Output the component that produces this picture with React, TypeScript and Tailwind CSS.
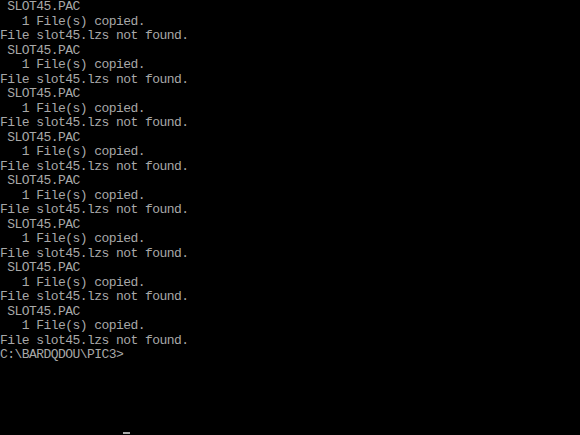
const group = [' SLOT45.PAC', '   1 File(s) copied.', 'File slot45.lzs not found.'];

const lines: string[] = [
  ...Array.from({ length: 8 }).flatMap(() => group),
  'C:\\BARDQDOU\\PIC3>',
];

export default function App() {
  return (
    <div
      className="h-[435px] w-[580px] overflow-hidden bg-black text-[13px] tracking-[-0.55px] text-[#a8a8a8]"
      style={{ fontFamily: '"Liberation Mono", "DejaVu Sans Mono", monospace' }}
    >
      {lines.map((line, i) => (
        <div key={i} className="h-[14.5px] whitespace-pre leading-[14.5px]">
          {line}
        </div>
      ))}
      {/* empty rows down to the cursor line */}
      <div className="h-[58px]" />
      <div className="flex h-[14.5px] items-end pb-[1px]">
        <div className="w-[123px]" />
        <div className="h-[2px] w-[7px] bg-[#a8a8a8]" />
      </div>
    </div>
  );
}
